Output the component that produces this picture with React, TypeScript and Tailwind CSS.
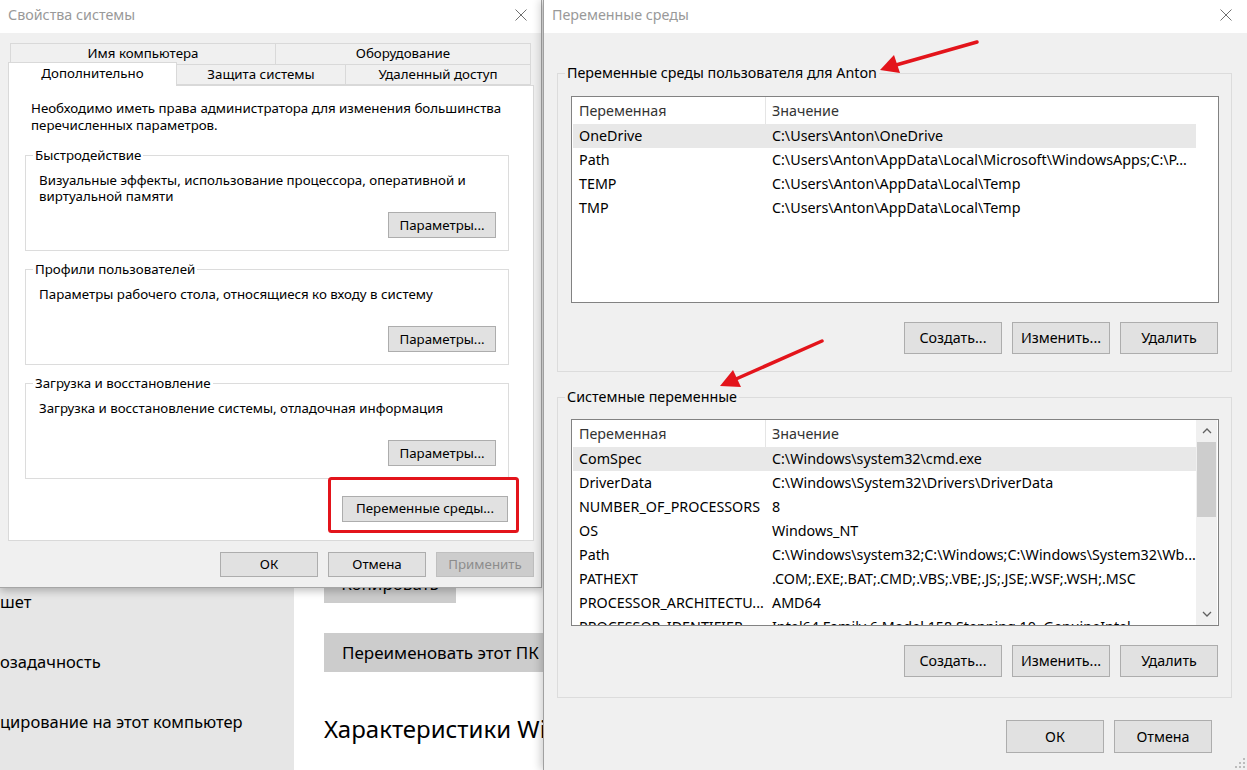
import React from 'react';

type Row = [string, string];

const userVars: Row[] = [
    ['OneDrive', 'C:\\Users\\Anton\\OneDrive'],
    ['Path', 'C:\\Users\\Anton\\AppData\\Local\\Microsoft\\WindowsApps;C:\\P...'],
    ['TEMP', 'C:\\Users\\Anton\\AppData\\Local\\Temp'],
    ['TMP', 'C:\\Users\\Anton\\AppData\\Local\\Temp'],
];

const systemVars: Row[] = [
    ['ComSpec', 'C:\\Windows\\system32\\cmd.exe'],
    ['DriverData', 'C:\\Windows\\System32\\Drivers\\DriverData'],
    ['NUMBER_OF_PROCESSORS', '8'],
    ['OS', 'Windows_NT'],
    ['Path', 'C:\\Windows\\system32;C:\\Windows;C:\\Windows\\System32\\Wb...'],
    ['PATHEXT', '.COM;.EXE;.BAT;.CMD;.VBS;.VBE;.JS;.JSE;.WSF;.WSH;.MSC'],
    ['PROCESSOR_ARCHITECTU...', 'AMD64'],
    ['PROCESSOR_IDENTIFIER', 'Intel64 Family 6 Model 158 Stepping 10, GenuineIntel'],
];

const CloseIcon = () => (
    <svg width="12" height="12" viewBox="0 0 12 12" className="shrink-0">
        <path d="M0.5 0.5 L11.5 11.5 M11.5 0.5 L0.5 11.5" stroke="#707070" strokeWidth="1" fill="none" />
    </svg>
);

const Chevron = ({ down }: { down?: boolean }) => (
    <svg width="10" height="6" viewBox="0 0 10 6">
        <path
            d={down ? 'M1 1 L5 5 L9 1' : 'M1 5 L5 1 L9 5'}
            stroke="#606060"
            strokeWidth="1.3"
            fill="none"
        />
    </svg>
);

const WinButton: React.FC<{ label: string; className?: string; disabled?: boolean }> = ({
    label,
    className = '',
    disabled,
}) => (
    <button
        type="button"
        className={`flex shrink-0 items-center justify-center whitespace-nowrap border ${
            disabled ? 'border-[#bfbfbf] bg-[#cccccc] text-[#8c8c8c]' : 'border-[#adadad] bg-[#e1e1e1] text-black'
        } ${className}`}
    >
        {label}
    </button>
);

const GroupBox: React.FC<{ title: string; className?: string; children: React.ReactNode }> = ({
    title,
    className = '',
    children,
}) => (
    <fieldset className={`border border-[#dcdcdc] ${className}`}>
        <legend className="ml-[7px] px-[2px]">{title}</legend>
        {children}
    </fieldset>
);

const VarList: React.FC<{ rows: Row[]; scroll?: boolean }> = ({ rows, scroll }) => (
    <div className="flex h-[207px] w-[648px] overflow-hidden border border-[#828282] bg-white">
        <div className="w-[624px] shrink-0 pl-px">
            <div className="flex h-[27px] items-center text-[#333]">
                <div className="w-[192px] pl-[6px]">Переменная</div>
                <div className="h-full w-px bg-[#e5e5e5]" />
                <div className="pl-[6px]">Значение</div>
            </div>
            {rows.map(([name, value], i) => (
                <div
                    key={name + i}
                    className={`flex h-[24px] items-center whitespace-nowrap ${i === 0 ? 'bg-[#e8e8e8]' : ''}`}
                >
                    <div className="w-[193px] shrink-0 pl-[6px]">{name}</div>
                    <div className="pl-[6px]">{value}</div>
                </div>
            ))}
        </div>
        {scroll && (
            <div className="flex w-[21px] shrink-0 flex-col bg-[#f0f0f0]">
                <div className="flex h-[22px] items-center justify-center">
                    <Chevron />
                </div>
                <div className="mx-px h-[75px] bg-[#cdcdcd]" />
                <div className="flex-1" />
                <div className="flex h-[22px] items-center justify-center">
                    <Chevron down />
                </div>
            </div>
        )}
    </div>
);

const SystemPropertiesDialog = () => (
    <div className="absolute left-0 top-0 z-10 flex h-[588px] w-[542px] flex-col border-b border-r border-[#a6a6a6] bg-[#f0f0f0] text-[13.3px] shadow-[0_3px_8px_rgba(0,0,0,0.25)]">
        <div className="flex h-[33px] items-center justify-between bg-white pb-[3px] pl-[8px] pr-[14px]">
            <span className="text-[14.3px] text-[#999]">Свойства системы</span>
            <CloseIcon />
        </div>
        <div className="pl-[8px] pr-[7px] pt-[10px]">
            {/* tabs */}
            <div className="ml-[2px] flex h-[21px] w-[521px]">
                <div className="flex w-[266px] items-center justify-center border border-b-0 border-[#d9d9d9]">
                    Имя компьютера
                </div>
                <div className="flex flex-1 items-center justify-center border border-b-0 border-l-0 border-[#d9d9d9]">
                    Оборудование
                </div>
            </div>
            <div className="flex h-[21px] items-end">
                <div className="relative z-10 -mb-px flex h-[24px] w-[169px] items-start justify-center border border-b-0 border-[#d9d9d9] bg-white pt-[1px]">
                    Дополнительно
                </div>
                <div className="flex h-[21px] w-[169px] items-center justify-center border border-l-0 border-[#d9d9d9]">
                    Защита системы
                </div>
                <div className="flex h-[21px] w-[185px] items-center justify-center border border-l-0 border-[#d9d9d9]">
                    Удаленный доступ
                </div>
            </div>
            {/* panel */}
            <div className="flex h-[456px] w-[526px] flex-col border border-[#d9d9d9] bg-white px-[16px] pt-[14px]">
                <p className="whitespace-nowrap pl-[6px] leading-[17px]">
                    Необходимо иметь права администратора для изменения большинства
                    <br />
                    перечисленных параметров.
                </p>
                <GroupBox title="Быстродействие" className="mt-[13px] w-[484px] leading-[17px]">
                    <div className="flex h-[86px] flex-col justify-between pb-[12px] pl-[13px] pt-[8px]">
                        <p className="whitespace-nowrap leading-[16px]">
                            Визуальные эффекты, использование процессора, оперативной и
                            <br />
                            виртуальной памяти
                        </p>
                        <WinButton label="Параметры..." className="mr-[12px] h-[26px] w-[108px] self-end" />
                    </div>
                </GroupBox>
                <GroupBox title="Профили пользователей" className="mt-[10px] w-[484px] leading-[17px]">
                    <div className="flex h-[86px] flex-col justify-between pb-[12px] pl-[13px] pt-[8px]">
                        <p className="whitespace-nowrap leading-[16px]">
                            Параметры рабочего стола, относящиеся ко входу в систему
                        </p>
                        <WinButton label="Параметры..." className="mr-[12px] h-[26px] w-[108px] self-end" />
                    </div>
                </GroupBox>
                <GroupBox title="Загрузка и восстановление" className="mt-[10px] w-[484px] leading-[17px]">
                    <div className="flex h-[86px] flex-col justify-between pb-[12px] pl-[13px] pt-[8px]">
                        <p className="whitespace-nowrap leading-[16px]">
                            Загрузка и восстановление системы, отладочная информация
                        </p>
                        <WinButton label="Параметры..." className="mr-[12px] h-[26px] w-[108px] self-end" />
                    </div>
                </GroupBox>
                <WinButton label="Переменные среды..." className="mr-[9px] mt-[17px] h-[26px] w-[166px] self-end" />
            </div>
            <div className="mt-[11px] flex justify-end gap-[10px]">
                <WinButton label="ОК" className="h-[25px] w-[98px]" />
                <WinButton label="Отмена" className="h-[25px] w-[98px]" />
                <WinButton label="Применить" className="h-[25px] w-[98px]" disabled />
            </div>
        </div>
    </div>
);

const SettingsBackground = () => (
    <div className="flex h-full">
        <div className="flex w-[294px] shrink-0 flex-col gap-[36px] bg-[#e6e6e6] pt-[590px] text-[16.5px] leading-[24px] text-black">
            <span className="whitespace-nowrap">шет</span>
            <span className="whitespace-nowrap">озадачность</span>
            <span className="whitespace-nowrap">цирование на этот компьютер</span>
        </div>
        <div className="flex flex-1 flex-col items-start bg-white pl-[30px] pt-[565px] text-black">
            <div className="flex h-[38px] w-[132px] items-center justify-center bg-[#cccccc] text-[17px]">
                Копировать
            </div>
            <div className="mt-[30px] flex h-[39px] items-center whitespace-nowrap bg-[#cccccc] px-[18px] text-[17px]">
                Переименовать этот ПК
            </div>
            <h2 className="mt-[40px] whitespace-nowrap text-[24px] leading-[34px]">Характеристики Windows</h2>
        </div>
    </div>
);

const EnvVarsDialog = () => (
    <div className="relative z-20 flex h-[770px] flex-1 flex-col border-l border-[#a0a0a0] bg-[#f0f0f0] text-[14.3px] shadow-[-3px_0_8px_rgba(0,0,0,0.18)]">
        <div className="flex h-[33px] items-center justify-between bg-white pb-[3px] pl-[8px] pr-[15px]">
            <span className="text-[14.3px] text-[#999]">Переменные среды</span>
            <CloseIcon />
        </div>
        <div className="flex flex-col pl-[13px] pr-[15px]">
            <GroupBox title="Переменные среды пользователя для Anton" className="mt-[31px] leading-[18px]">
                <div className="flex flex-col items-start pb-[17px] pl-[13px] pt-[14px]">
                    <VarList rows={userVars} />
                    <div className="mt-[19px] flex w-[647px] justify-end gap-[10px]">
                        <WinButton label="Создать..." className="h-[32px] w-[98px]" />
                        <WinButton label="Изменить..." className="h-[32px] w-[98px]" />
                        <WinButton label="Удалить" className="h-[32px] w-[98px]" />
                    </div>
                </div>
            </GroupBox>
            <GroupBox title="Системные переменные" className="mt-[16px] leading-[18px]">
                <div className="flex flex-col items-start pb-[20px] pl-[13px] pt-[13px]">
                    <VarList rows={systemVars} scroll />
                    <div className="mt-[19px] flex w-[647px] justify-end gap-[10px]">
                        <WinButton label="Создать..." className="h-[32px] w-[98px]" />
                        <WinButton label="Изменить..." className="h-[32px] w-[98px]" />
                        <WinButton label="Удалить" className="h-[32px] w-[98px]" />
                    </div>
                </div>
            </GroupBox>
            <div className="mt-[22px] flex justify-end gap-[10px] pr-[20px]">
                <WinButton label="ОК" className="h-[33px] w-[98px]" />
                <WinButton label="Отмена" className="h-[33px] w-[98px]" />
            </div>
        </div>
        {/* resize grip */}
        <svg className="absolute bottom-[1px] right-[1px]" width="12" height="12" viewBox="0 0 12 12">
            {[
                [9, 1],
                [9, 5],
                [5, 5],
                [9, 9],
                [5, 9],
                [1, 9],
            ].map(([x, y]) => (
                <rect key={`${x}-${y}`} x={x} y={y} width="2" height="2" fill="#bcbcbc" />
            ))}
        </svg>
    </div>
);

const Annotations = () => (
    <svg className="pointer-events-none absolute left-0 top-0 z-30" width="1247" height="770">
        <rect x="329.5" y="478.5" width="188" height="53" rx="2" fill="none" stroke="#e3141b" strokeWidth="3" />
        <line x1="977" y1="42" x2="896" y2="65" stroke="#e3141b" strokeWidth="3.5" strokeLinecap="round" />
        <polygon points="880,70 900,73 894,55" fill="#e3141b" />
        <line x1="822" y1="341" x2="736" y2="379" stroke="#e3141b" strokeWidth="3.5" strokeLinecap="round" />
        <polygon points="720,386 741,387 733,370" fill="#e3141b" />
    </svg>
);

export default function App() {
    return (
        <div className="relative flex h-[770px] w-[1247px] overflow-hidden bg-white font-['Segoe_UI','Noto_Sans',sans-serif] text-black">
            <div className="relative h-[770px] w-[543px] shrink-0 overflow-hidden">
                <SettingsBackground />
                <SystemPropertiesDialog />
            </div>
            <EnvVarsDialog />
            <Annotations />
        </div>
    );
}
